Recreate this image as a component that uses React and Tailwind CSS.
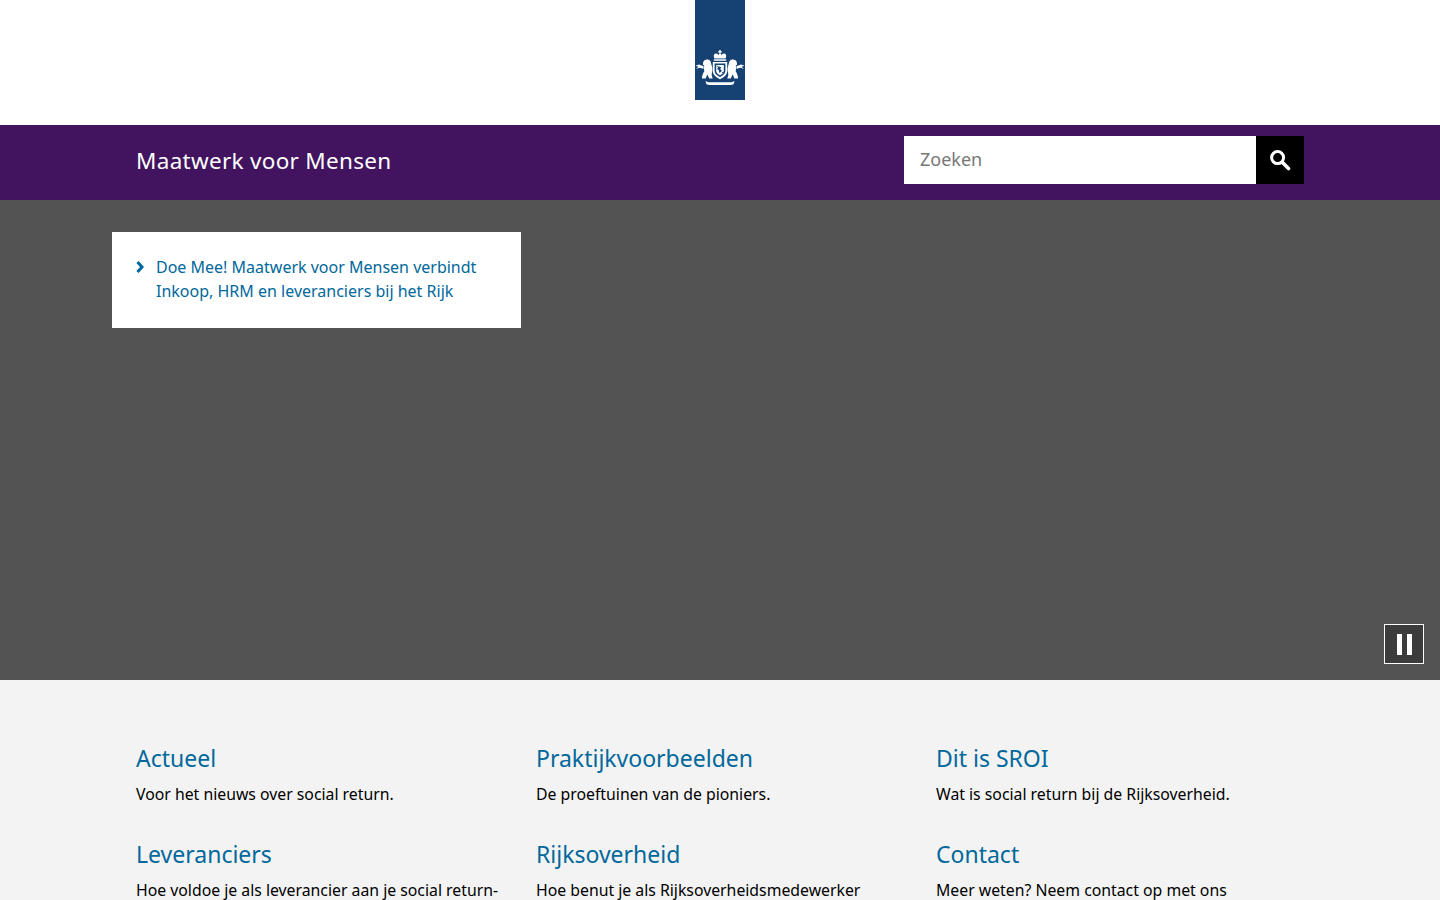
const font = { fontFamily: '"Noto Sans", sans-serif' }

function Emblem() {
  return (
    <svg viewBox="0 0 50 50" width="50" height="50" className="block" fill="#fff">
      {/* kroon */}
      <path d="M24.300 0h1.400v1.300h1.100v1.200h-1.100v1.300h-1.400V2.500h-1.100V1.300h1.100z" />
      <path d="M19.500 8.500c-1.300-2.400-0.800-4.700 1.200-4.900 1.300-0.100 2 0.600 2.600 1.400 0.400-0.800 1-1.200 1.700-1.200s1.300 0.400 1.700 1.200c0.600-0.800 1.300-1.500 2.600-1.400 2 0.200 2.500 2.500 1.200 4.900z" />
      <path d="M18.800 9.300h12.400v1.500H18.800z" />
      {/* schild */}
      <path d="M17.800 12h14.400v9c0 4-3.600 6.500-7.200 8.300-3.600-1.800-7.200-4.300-7.200-8.300z" />
      <path d="M19.600 13.500h10.800v7.300c0 3-2.800 4.800-5.400 6.300-2.600-1.500-5.400-3.300-5.400-6.300z" fill="#154273" />
      <path d="M21.200 15h7.600v5.800c0 2.100-1.900 3.400-3.800 4.500-1.900-1.100-3.800-2.400-3.800-4.500z" />
      <path d="M23.500 16.200l2.700 1-1 1.800 1.700 1.900-2.500 2-0.700-2.800-1.500-1z M21.800 15.800h1v1h-1z M27.200 22h1v1h-1z" fill="#154273" />
      {/* leeuw links */}
      <path d="M9.500 10.200c2.200-1.300 5-0.800 6 1 0.700 1.400 0.600 3 1.200 4.300 0.900 2 1 5 0.200 7.300-0.400 1.400-0.200 3.300 0.900 5.700h-3.500c-0.900-1.400-1.400-2.800-1.700-4-1 1.200-1.700 2.600-1.900 4H7c0-2.800 1-5.300 2.400-7.400-0.700-1.900-0.700-3.800-0.100-5.600-1-0.200-1.500-1-1.300-2.100 0.100-1.300 0.500-2.400 1.500-3.200z" />
      <path d="M8.500 16.200L4 14.600l-3.500 1.200 3 0.900-2.600 2.200 3.500-1.100 4.100 1z" />
      {/* leeuw rechts */}
      <path d="M40.500 10.200c-2.200-1.300-5-0.800-6 1-0.700 1.400-0.600 3-1.200 4.300-0.900 2-1 5-0.200 7.300 0.400 1.400 0.200 3.300-0.900 5.700h3.500c0.900-1.400 1.400-2.800 1.700-4 1 1.200 1.700 2.600 1.900 4H43c0-2.800-1-5.300-2.400-7.400 0.700-1.900 0.700-3.800 0.100-5.600 1-0.200 1.500-1 1.300-2.100-0.100-1.300-0.500-2.400-1.500-3.200z" />
      <path d="M41.500 16.200l4.500-1.600 3.500 1.200-3 0.900 2.600 2.200-3.500-1.100-4.100 1z" />
      {/* lint */}
      <path d="M10.500 31c1.500 0.900 2.800 1.200 4.500 1.200h20c1.700 0 3-0.300 4.500-1.200l-0.900 3.200c-1.200 0.600-2.300 0.800-3.600 0.800H15c-1.300 0-2.400-0.200-3.600-0.800z" />
    </svg>
  )
}

const blocks = [
  { title: "Actueel", text: "Voor het nieuws over social return." },
  { title: "Praktijkvoorbeelden", text: "De proeftuinen van de pioniers." },
  { title: "Dit is SROI", text: "Wat is social return bij de Rijksoverheid." },
  { title: "Leveranciers", text: "Hoe voldoe je als leverancier aan je social return-verplichting?" },
  { title: "Rijksoverheid", text: "Hoe benut je als Rijksoverheidsmedewerker social return?" },
  { title: "Contact", text: "Meer weten? Neem contact op met ons expertisecentrum." },
]

export default function App() {
  return (
    <div style={font} className="bg-[#f3f3f3] text-black">
      {/* logo */}
      <header className="h-[125px] bg-white flex justify-center">
        <div className="w-[50px] h-[100px] bg-[#154273] flex items-end">
          <Emblem />
        </div>
      </header>

      {/* balk met zoeken */}
      <div className="h-[75px] bg-[#42145f]">
        <div className="w-[1168px] mx-auto flex justify-between pt-[11px]">
          <div className="text-[22.5px] leading-[50px] text-white tracking-[0.3px]">Maatwerk voor Mensen</div>
          <form className="flex">
            <input
              type="text"
              placeholder="Zoeken"
              className="w-[352px] h-[48px] px-4 pb-[2px] bg-white text-[18px] text-black placeholder-[#777] outline-none"
            />
            <button type="button" className="w-[48px] h-[48px] bg-black flex items-center justify-center">
              <svg width="22" height="22" viewBox="0 0 22 22" fill="none" stroke="#fff">
                <circle cx="8.600" cy="8.600" r="6" strokeWidth="3" />
                <path d="M13.500 13.500L19.500 19.500" strokeWidth="3.600" strokeLinecap="round" />
              </svg>
            </button>
          </form>
        </div>
      </div>

      {/* hero */}
      <section className="relative h-[480px] bg-[#535353]">
        <div className="w-[1216px] mx-auto pt-8">
          <div className="w-[409px] h-[96px] bg-white pl-6 pt-[23px] flex">
            <svg width="9" height="12" viewBox="0 0 9 12" className="mt-[6px] shrink-0" fill="none" stroke="#01689b" strokeWidth="3">
              <path d="M1.500 1l4.500 5-4.500 5" />
            </svg>
            <a href="#" className="ml-[11px] text-[16px] leading-[24px] text-[#01689b]">
              Doe Mee! Maatwerk voor Mensen verbindt<br />Inkoop, HRM en leveranciers bij het Rijk
            </a>
          </div>
        </div>
        <button
          type="button"
          aria-label="Pauzeren"
          className="absolute right-4 bottom-4 w-10 h-10 border border-white bg-[#3c3c3c] flex items-center justify-center gap-[5px]"
        >
          <span className="block w-[5px] h-[21px] bg-white" />
          <span className="block w-[5px] h-[21px] bg-white" />
        </button>
      </section>

      {/* blokken */}
      <main className="w-[1200px] mx-auto pl-4 pt-[62px] pb-10 grid grid-cols-[400px_400px_368px] gap-y-[24px]">
        {blocks.map((b) => (
          <div key={b.title} className="w-[368px] min-h-[72px]">
            <h2 className="text-[23px] leading-[32px] text-[#01689b]">{b.title}</h2>
            <p className="mt-[8px] text-[15.8px] leading-[24px]">{b.text}</p>
          </div>
        ))}
      </main>
    </div>
  )
}
